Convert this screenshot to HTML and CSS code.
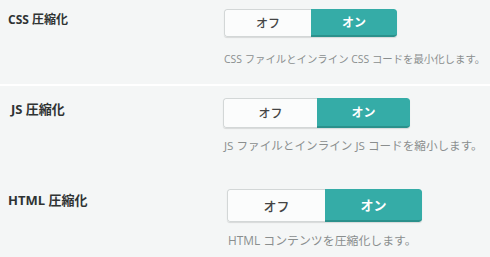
FILE: index.html
```html
<!DOCTYPE html>
<html lang="ja">
<head>
  <meta charset="UTF-8" />
  <meta name="viewport" content="width=device-width, initial-scale=1.0" />
  <title>圧縮設定</title>
  <link rel="stylesheet" href="styles.css">
</head>
<body>

  <div class="settings">
    <div class="setting setting--css">
      <div class="setting-label">CSS 圧縮化</div>
      <div class="setting-control">
        <div class="toggle">
          <span class="toggle-btn">オフ</span>
          <span class="toggle-btn active">オン</span>
        </div>
        <p class="setting-desc">CSS ファイルとインライン CSS コードを最小化します。</p>
      </div>
    </div>

    <div class="setting setting--js">
      <div class="setting-label">JS 圧縮化</div>
      <div class="setting-control">
        <div class="toggle">
          <span class="toggle-btn">オフ</span>
          <span class="toggle-btn active">オン</span>
        </div>
        <p class="setting-desc">JS ファイルとインライン JS コードを縮小します。</p>
      </div>
    </div>

    <div class="setting setting--html">
      <div class="setting-label">HTML 圧縮化</div>
      <div class="setting-control">
        <div class="toggle">
          <span class="toggle-btn">オフ</span>
          <span class="toggle-btn active">オン</span>
        </div>
        <p class="setting-desc">HTML コンテンツを圧縮化します。</p>
      </div>
    </div>
  </div>

</body>
</html>
```

FILE: styles.css
```css
body {
  margin: 0;
  font-family: "Open Sans", "Noto Sans CJK JP", sans-serif;
  background-color: #f4f6f6;
  color: #333;
}
.setting {
  display: grid;
  grid-template-columns: 216px 1fr;
  padding-left: 8px;
}
.setting-label {
  font-weight: bold;
  font-size: 12px;
  line-height: 20px;
  margin-top: 1px;
  color: #2f3333;
}
.setting-control {
  display: flex;
  flex-direction: column;
  align-items: flex-start;
  min-width: 0;
}
.toggle {
  display: flex;
  width: 173px;
  height: 28px;
  border-radius: 3px;
  overflow: hidden;
  box-shadow: 0 1px 1px rgba(0, 0, 0, 0.12);
}
.toggle-btn {
  flex: 1;
  display: flex;
  align-items: center;
  justify-content: center;
  font-size: 12px;
  font-weight: 500;
  color: #444;
  background-color: #fbfcfc;
  border: 1px solid #d3d7d7;
  border-right: none;
  border-radius: 3px 0 0 3px;
}
.toggle-btn.active {
  color: #fff;
  font-weight: bold;
  background-color: #35aca7;
  border: none;
  border-bottom: 2px solid #2b918c;
  border-radius: 0 3px 3px 0;
}
.setting-desc {
  margin: 14px 0 0;
  font-size: 10.4px;
  line-height: 16px;
  white-space: nowrap;
  color: #8a8e8e;
}

/* each row */
.setting--css {
  padding-top: 9px;
  padding-bottom: 17px;
  border-bottom: 2px solid #fff;
}
.setting--js {
  padding-top: 12px;
}
.setting--js .setting-label {
  padding-left: 3px;
  font-size: 13px;
}
.setting--js .toggle {
  margin-left: -1px;
  width: 187px;
  height: 30px;
}
.setting--js .setting-desc {
  margin-top: 10px;
  font-size: 11.6px;
}
.setting--html {
  padding-top: 35px;
}
.setting--html .setting-label {
  font-size: 13px;
}
.setting--html .toggle {
  margin-left: 3px;
  width: 195px;
  height: 33px;
}
.setting--html .toggle-btn {
  font-size: 13px;
}
.setting--html .setting-desc {
  margin-top: 10px;
  margin-left: 4px;
  font-size: 11.9px;
}
```
